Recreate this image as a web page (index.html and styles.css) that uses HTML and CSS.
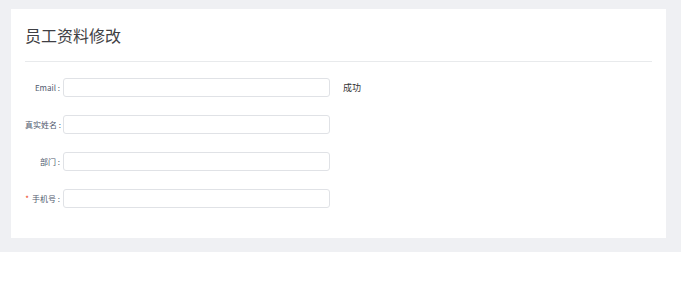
FILE: index.html
```html
<!DOCTYPE html>
<html lang="zh">
<head>
<meta charset="utf-8">
<link rel="stylesheet" href="styles.css">
</head>
<body>
<div class="page">
  <div class="card">
    <div class="card-head"><h1 class="title">员工资料修改</h1></div>
    <form class="form">
      <div class="row">
        <label class="label">Email :</label>
        <input class="input" type="text">
        <span class="msg">成功</span>
      </div>
      <div class="row">
        <label class="label">真实姓名 :</label>
        <input class="input" type="text">
      </div>
      <div class="row">
        <label class="label">部门 :</label>
        <input class="input" type="text">
      </div>
      <div class="row">
        <label class="label"><span class="req">*</span>手机号 :</label>
        <input class="input" type="text">
      </div>
    </form>
  </div>
</div>
</body>
</html>
```
FILE: styles.css
```css
html, body {
  margin: 0;
  padding: 0;
  background: #fff;
  font-family: "Noto Sans CJK SC", "Noto Sans", sans-serif;
}
.page {
  background: #eff0f3;
  padding: 9px 15px 14px 11px;
}
.card {
  background: #fff;
  padding: 0 14px;
}
.card-head {
  height: 52px;
  display: flex;
  align-items: center;
  border-bottom: 1px solid #e8eaec;
}
.title {
  margin: 0;
  font-size: 16px;
  font-weight: 400;
  color: #3f3f44;
  line-height: 20px;
}
.form {
  padding: 16px 0 12px;
}
.row {
  display: flex;
  align-items: center;
  height: 19px;
  margin-bottom: 18px;
}
.label {
  width: 35px;
  padding-right: 3px;
  text-align: right;
  font-size: 8px;
  color: #515a6e;
  white-space: nowrap;
}
.req {
  color: #ed4014;
  margin-right: 3px;
}
.input {
  box-sizing: border-box;
  width: 267px;
  height: 19px;
  margin: 0;
  border: 1px solid #e0e2e6;
  border-radius: 3px;
  background: #fff;
  padding: 0 5px;
  outline: none;
}
.msg {
  margin-left: 13px;
  font-size: 9px;
  color: #333;
}
```
